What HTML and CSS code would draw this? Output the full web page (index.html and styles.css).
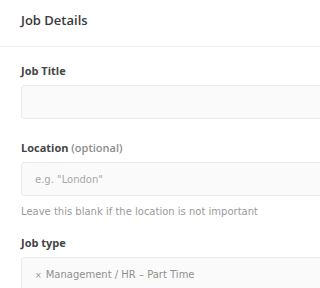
FILE: index.html
```html
<!DOCTYPE html>
<html>
<head>
<meta charset="utf-8">
<link rel="stylesheet" href="styles.css">
</head>
<body>
<div class="panel">
  <div class="panel-header">Job Details</div>
  <div class="panel-body">
    <div class="field">
      <label class="label">Job Title</label>
      <div class="input"></div>
    </div>
    <div class="field field-help">
      <label class="label">Location <span class="optional">(optional)</span></label>
      <div class="input"><span class="placeholder">e.g. "London"</span></div>
      <div class="help">Leave this blank if the location is not important</div>
    </div>
    <div class="field">
      <label class="label">Job type</label>
      <div class="input"><span class="tag"><span class="x">×</span>Management / HR – Part Time</span></div>
    </div>
  </div>
</div>
</body>
</html>
```
FILE: styles.css
```css
html, body {
  margin: 0;
  padding: 0;
  background: #fff;
}
body {
  font-family: "DejaVu Sans", "Open Sans", sans-serif;
  color: #444;
}
.panel {
  width: 100%;
  height: 288px;
  overflow: hidden;
}
.panel-header {
  height: 47px;
  box-sizing: border-box;
  padding: 12px 0 0 21px;
  font-family: "Open Sans", sans-serif;
  font-size: 13px;
  line-height: 16px;
  font-weight: 600;
  color: #3a3a3a;
  border-bottom: 1px solid #efefef;
}
.panel-body {
  padding: 17px 0 0 21px;
}
.field {
  display: flex;
  flex-direction: column;
  margin-bottom: 22px;
}
.field-help {
  margin-bottom: 18px;
}
.label {
  font-family: "Open Sans", sans-serif;
  font-size: 11px;
  font-weight: 700;
  color: #454545;
  line-height: 14px;
  margin-bottom: 7px;
}
.optional {
  font-weight: 600;
  color: #8c8c8c;
}
.input {
  height: 34px;
  box-sizing: border-box;
  border: 1px solid #ebebeb;
  border-radius: 3px;
  background: #fafafa;
  display: flex;
  align-items: center;
  padding-left: 13px;
  font-size: 10px;
  margin-right: -12px;
}
.placeholder {
  color: #a8a8a8;
}
.help {
  font-size: 10px;
  line-height: 12px;
  color: #9a9a9a;
  margin-top: 10px;
}
.tag {
  color: #8f8f8f;
}
.x {
  font-size: 8px;
  margin-right: 4px;
}
```
